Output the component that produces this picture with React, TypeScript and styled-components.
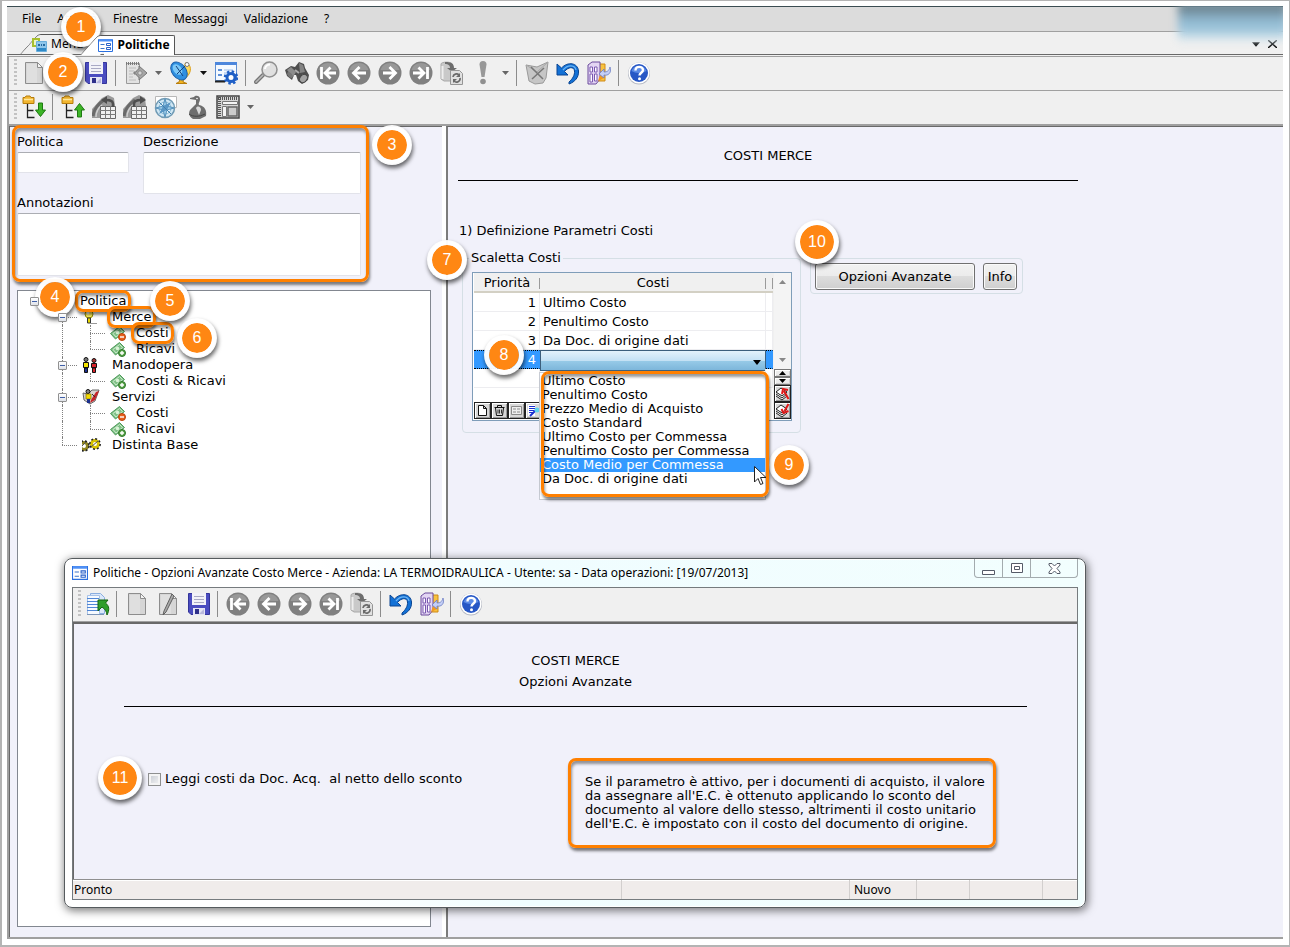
import React from "react";
import styled, { createGlobalStyle, css } from "styled-components";

const UI = `"Noto Sans", "Open Sans", sans-serif`;
const FORM = `"DejaVu Sans", Verdana, sans-serif`;
const ORANGE = "#ff8000";
const GREY = "#a0a0a0";
const DARK = "#696969";
const FACE = "#f0f0f0";
const PANE = "#f1f1fa";

const Global = createGlobalStyle`
  *, *::before, *::after { box-sizing: border-box; }
  body { margin: 0; background: #e6e6e6; color: #000; font: 13px/16px ${FORM}; }
  button, input, textarea, select { font: inherit; color: inherit; margin: 0; }
  button { border: 0; padding: 0; background: none; }
  ul { list-style: none; margin: 0; padding: 0; }
  svg { display: block; flex: none; }
`;

/* ---------- shell ---------- */

const Page = styled.div`
  position: relative;
`;
const Frame = styled.div`
  display: flex;
  min-height: 100vh;
  border: solid #b4b4b4;
  border-width: 1px 1px 2px 2px;
  background: #fff;
  padding: 5px 6px 6px 5px;
`;
const AppWindow = styled.div`
  position: relative;
  flex: 1;
  display: flex;
  flex-direction: column;
  overflow: hidden;
  background: ${FACE};
`;
const MenuBar = styled.nav`
  display: flex;
  align-items: center;
  gap: 16px;
  height: 26px;
  padding-left: 15px;
  border-top: 1px solid #3b4c52;
  border-bottom: 1px solid ${GREY};
  background: #dcdcdc;
`;
const MenuItem = styled.button`
  font: 12px/16px ${UI};
`;
const CaptionHaze = styled.div`
  position: absolute;
  top: -4px;
  right: -4px;
  width: 109px;
  height: 39px;
  background: linear-gradient(#5d7079, #93bcd4 50%, #9cc4da 70%, #e4edf1);
  filter: blur(4px);
`;
const TabBar = styled.div`
  display: flex;
  align-items: flex-end;
  height: 23px;
  padding: 0 6px 0 13px;
  border-bottom: 1px solid ${DARK};
`;
const Tab = styled.button<{ $active?: boolean }>`
  position: relative;
  display: flex;
  align-items: center;
  gap: 4px;
  height: 20px;
  padding: 0 ${(p) => (p.$active ? 5 : 0)}px 0 ${(p) => (p.$active ? 18 : 12)}px;
  margin-left: ${(p) => (p.$active ? -3 : 0)}px;
  margin-bottom: ${(p) => (p.$active ? -1 : 0)}px;
  font: ${(p) => (p.$active ? "bold" : "normal")} 12px/16px ${UI};
  z-index: ${(p) => (p.$active ? 1 : 0)};
  &::before, &::after {
    content: "";
    position: absolute;
    z-index: -1;
    top: 0;
    bottom: 0;
    border-top: 1px solid #555;
    background: ${(p) => (p.$active ? "#fff" : FACE)};
  }
  &::before {
    left: 9px;
    width: 20px;
    border-left: 1px solid #555;
    border-top-left-radius: 3px;
    transform: skewX(-42deg);
  }
  &::after {
    left: 24px;
    right: ${(p) => (p.$active ? 0 : -8)}px;
    border-right: ${(p) => (p.$active ? "1px solid #555" : "0")};
    border-top-right-radius: 2px;
  }
`;
const TabTools = styled.div`
  display: flex;
  align-items: center;
  gap: 8px;
  height: 20px;
  margin-left: auto;
`;
const Shell = styled.div`
  flex: 1;
  display: flex;
  flex-direction: column;
  margin-top: 1px;
  border-top: 1px solid ${GREY};
  border-left: 2px solid ${GREY};
`;
const Toolbar = styled.div`
  display: flex;
  align-items: center;
  height: 34px;
  padding: 0 0 2px 5px;
  border-bottom: 1px solid ${GREY};
  background: ${FACE};
`;
const Grip = styled.span`
  width: 3px;
  height: 28px;
  margin-right: 1px;
  background: repeating-linear-gradient(#c2c2c2 0 2px, transparent 2px 4px);
`;
const ToolButton = styled.button`
  display: flex;
  align-items: center;
  justify-content: center;
  width: 31px;
  height: 28px;
`;
const DropButton = styled(ToolButton)`
  width: 14px;
`;
const Divider = styled.span<{ $tight?: boolean }>`
  width: 1px;
  height: 26px;
  margin: 0 4px 0 ${(p) => (p.$tight ? 3 : 4)}px;
  background: #8c8c8c;
`;
const Panes = styled.div`
  flex: 1;
  display: flex;
  border-top: 1px solid ${GREY};
  border-bottom: 2px solid ${GREY};
  background: ${PANE};
`;
const SidePane = styled.aside`
  display: flex;
  flex-direction: column;
  flex: none;
  width: 433px;
  padding: 7px 11px 10px 7px;
  border-top: 1px solid ${DARK};
  border-left: 1px solid ${DARK};
`;
const Splitter = styled.div`
  flex: none;
  width: 4px;
  background: #fff;
`;
const DetailPane = styled.main`
  flex: 1;
  padding: 21px 10px;
  border-top: 1px solid ${DARK};
  border-left: 2px solid #7c7c7c;
`;

/* ---------- form ---------- */

const HeaderForm = styled.form`
  position: relative;
  align-self: flex-start;
  display: grid;
  grid-template-columns: 112px 218px;
  column-gap: 14px;
`;
const Field = styled.label<{ $wide?: boolean }>`
  display: flex;
  flex-direction: column;
  gap: 2px;
  ${(p) => p.$wide && "grid-column: 1 / -1; padding-top: 1px;"}
`;
const boxed = css`
  width: 100%;
  border: 1px solid #e2e3ea;
  border-top-color: #abadb3;
  border-radius: 2px;
  background: #fff;
  resize: none;
  outline: 0;
  padding: 1px 3px;
`;
const TextBox = styled.input`
  ${boxed}
  height: 21px;
`;
const TextArea = styled.textarea<{ $h: number }>`
  ${boxed}
  display: block;
  height: ${(p) => p.$h}px;
`;

/* ---------- annotations ---------- */

const ring = css`
  border: 3px solid ${ORANGE};
  border-radius: 8px;
  box-shadow: 1px 3px 3px rgba(0, 0, 0, 0.5), inset 1px 3px 3px rgba(0, 0, 0, 0.4);
`;
const Ring = styled.span<{ $inset: string }>`
  position: absolute;
  inset: ${(p) => p.$inset};
  pointer-events: none;
  ${ring}
`;
const Step = styled.span<{ $x: number; $y: number; $big?: boolean }>`
  position: absolute;
  left: ${(p) => p.$x}px;
  top: ${(p) => p.$y}px;
  display: grid;
  place-items: center;
  width: ${(p) => (p.$big ? 44 : 40)}px;
  height: ${(p) => (p.$big ? 44 : 40)}px;
  margin: ${(p) => (p.$big ? "-22px 0 0 -22px" : "-20px 0 0 -20px")};
  border: 5px solid rgba(255, 255, 255, 0.96);
  border-radius: 50%;
  background: #ff8713;
  background-clip: padding-box;
  box-shadow: 1px 3px 4px rgba(0, 0, 0, 0.6);
  color: #fff;
  font: 16px/20px "Liberation Sans", Arial, sans-serif;
`;

/* ---------- tree ---------- */

const Tree = styled.ul`
  flex: 1;
  margin-top: 14px;
  padding: 2px 2px;
  border: 1px solid #828790;
  background: #fff;
`;
const TreeRow = styled.li`
  display: flex;
  align-items: center;
  height: 16px;
`;
const Guide = styled.span<{ $line?: "through" | "end" | "start"; $arm?: boolean }>`
  position: relative;
  flex: none;
  width: 28px;
  height: 16px;
  &::before {
    content: "";
    position: absolute;
    left: 14px;
    top: ${(p) => (p.$line === "start" ? 8 : 0)}px;
    bottom: ${(p) => (p.$line === "end" ? 8 : 0)}px;
    border-left: ${(p) => (p.$line ? "1px dotted #808080" : "0")};
  }
  &::after {
    content: "";
    position: absolute;
    left: 14px;
    top: 8px;
    width: 15px;
    border-top: ${(p) => (p.$arm ? "1px dotted #808080" : "0")};
  }
`;
const Expander = styled.button`
  position: absolute;
  z-index: 1;
  left: 10px;
  top: 4px;
  width: 9px;
  height: 9px;
  border: 1px solid #919191;
  border-radius: 1px;
  background: linear-gradient(#3f5fa8, #3f5fa8) center / 5px 1px no-repeat, linear-gradient(#fff, #dfe2e8);
`;
const TreeIcon = styled.span<{ $w: number }>`
  display: flex;
  flex: none;
  width: ${(p) => p.$w}px;
  margin: 0 6px;
`;
const TreeLabel = styled.span`
  position: relative;
  line-height: 16px;
  white-space: nowrap;
`;

/* ---------- detail ---------- */

const Title = styled.h1`
  max-width: 620px;
  margin: 0;
  padding-bottom: 16px;
  border-bottom: 1px solid #000;
  font: inherit;
  text-align: center;
`;
const SectionTitle = styled.h2`
  margin: 42px 0 11px 1px;
  font: inherit;
`;
const Groups = styled.div`
  display: flex;
  align-items: flex-start;
  gap: 9px;
  padding-left: 4px;
`;
const Group = styled.fieldset`
  width: 339px;
  min-width: 0;
  margin: 0;
  padding: 6px 8px 11px 9px;
  border: 1px solid #d5dfe5;
  border-radius: 4px;
`;
const Legend = styled.legend`
  margin-left: -3px;
  padding: 0 2px;
`;
const ActionGroup = styled.div`
  display: flex;
  gap: 8px;
  margin-top: 8px;
  padding: 4px 5px 3px 4px;
  border: 1px solid #d5dfe5;
  border-radius: 4px;
`;
const PushButton = styled.button<{ $w: number }>`
  width: ${(p) => p.$w}px;
  height: 27px;
  border: 1px solid #707070;
  border-radius: 3px;
  background: linear-gradient(#f2f2f2, #ebebeb 50%, #dddddd 50%, #cfcfcf);
  box-shadow: inset 0 0 0 1px #fafafa;
`;
const GridBox = styled.div`
  display: flex;
  height: 149px;
  border: 1px solid #7f9db9;
  background: #fff;
`;
const GridMain = styled.div`
  display: flex;
  flex-direction: column;
  flex: 1;
  padding-left: 1px;
`;
const Grid = styled.table`
  width: 100%;
  table-layout: fixed;
  border-spacing: 0;
`;
const HeadCell = styled.th`
  height: 20px;
  padding: 2px 0 0;
  border-bottom: 2px solid #d3d0c4;
  background: linear-gradient(90deg, transparent calc(100% - 1px), #9a9a9a 0) 0 5px / 100% 11px no-repeat, ${FACE};
  font-weight: normal;
  line-height: 16px;
`;
const Cell = styled.td<{ $num?: boolean; $sel?: boolean }>`
  position: relative;
  height: 19px;
  padding: ${(p) => (p.$sel ? 1 : 2)}px ${(p) => (p.$sel && !p.$num ? 0 : 3)}px 0;
  border-right: 1px solid #ededf0;
  border-bottom: 1px solid #ededf0;
  line-height: 16px;
  vertical-align: bottom;
  text-align: ${(p) => (p.$num ? "right" : "left")};
  ${(p) =>
    p.$sel &&
    css`
      border-top: 1px dotted #000;
      border-bottom: 1px dotted #000;
      border-right-color: #39f;
      background: #39f;
      color: #fff;
    `}
`;
const Combo = styled.select`
  position: absolute;
  left: 0;
  top: -1px;
  width: 226px;
  height: 21px;
  appearance: none;
  border: 1px solid #3c5f7c;
  background: linear-gradient(#e3f2fb, #c4e1f4 50%, #98cbe8 50%, #7db6da);
  color: #000;
`;
const ComboArrow = styled.svg`
  position: absolute;
  left: 213px;
  top: 9px;
`;
const Options = styled.ul`
  position: absolute;
  z-index: 2;
  left: -1px;
  top: 21px;
  width: 227px;
  height: 128px;
  padding-top: 1px;
  border: 1px solid #c8ccd4;
  background: #fff;
  color: #000;
`;
const Option = styled.li<{ $on?: boolean }>`
  height: 14px;
  padding-left: 2px;
  line-height: 14px;
  white-space: nowrap;
  background: ${(p) => (p.$on ? "#39f" : "transparent")};
  color: ${(p) => (p.$on ? "#fff" : "#000")};
`;
const Pointer = styled.svg`
  position: absolute;
  left: 214px;
  top: 93px;
  z-index: 1;
`;
const GridActions = styled.div`
  display: flex;
  margin-top: auto;
  padding-bottom: 1px;
`;
const TinyButton = styled.button<{ $h?: number }>`
  display: grid;
  flex: none;
  place-items: center;
  width: 17px;
  height: ${(p) => p.$h ?? 17}px;
  overflow: hidden;
  border: 1px solid ${(p) => (p.$h ? "#777" : "#222")};
  background: ${(p) => (p.$h ? "#ececec" : "#d8d8d8")};
  box-shadow: inset 1px 1px #fff, inset -1px -1px ${(p) => (p.$h ? "#d0d0d0" : "#999")};
`;
const GridSide = styled.div`
  display: flex;
  flex-direction: column;
  align-items: center;
  width: 18px;
  border-left: 1px solid #f0f0f0;
`;
const Scroll = styled.div`
  display: flex;
  flex-direction: column;
  justify-content: space-between;
  align-items: center;
  width: 17px;
  height: 96px;
  padding: 7px 0;
  background: #f4f4f4;
`;

/* ---------- dialog ---------- */

const Dialog = styled.section`
  position: absolute;
  left: 64px;
  top: 558px;
  width: 1022px;
  padding: 0 7px 7px;
  border: 1px solid #565b5e;
  border-radius: 8px;
  background: linear-gradient(90deg, #fff 25%, #f0fdff 45%, #f2fefe);
  box-shadow: 1px 2px 8px 1px rgba(0, 0, 0, 0.5), inset 0 0 0 1px #fff;
`;
const DialogBar = styled.header`
  display: flex;
  align-items: center;
  gap: 5px;
  height: 28px;
  font: 12px/16px ${UI};
`;
const CaptionButtons = styled.div`
  display: flex;
  align-self: flex-start;
  margin-left: auto;
  border: 1px solid #a3abae;
  border-top: 0;
  border-radius: 0 0 4px 4px;
`;
const CaptionButton = styled.button<{ $w: number }>`
  display: grid;
  place-items: center;
  width: ${(p) => p.$w}px;
  height: 18px;
  & + & {
    border-left: 1px solid #a3abae;
  }
`;
const DialogBody = styled.div`
  border: 1px solid #767b7e;
  background: ${PANE};
`;
const DialogContent = styled.div`
  padding: 26px 30px 31px 50px;
  border-top: 2px solid ${DARK};
  border-left: 1px solid ${DARK};
`;
const DialogTitle = styled.h2`
  margin: 0 20px 0 0;
  padding-bottom: 14px;
  border-bottom: 1px solid #000;
  font: inherit;
  line-height: 21px;
  text-align: center;
`;
const DialogRow = styled.div`
  display: flex;
  justify-content: space-between;
  align-items: flex-start;
  padding: 51px 51px 0 24px;
`;
const CheckLabel = styled.label`
  display: flex;
  align-items: center;
  gap: 4px;
  padding-top: 13px;
  white-space: pre;
`;
const CheckBox = styled.input`
  appearance: none;
  width: 13px;
  height: 13px;
  border: 1px solid #8e8f8f;
  background: linear-gradient(135deg, #c4c8d0, #f6f6f6);
  box-shadow: inset 0 0 0 2px #f4f4f4;
`;
const Note = styled.p`
  flex: none;
  width: 428px;
  margin: 0;
  padding: 14px 0 14px 14px;
  line-height: 14px;
  white-space: pre;
  ${ring}
`;
const StatusBar = styled.footer`
  display: flex;
  height: 20px;
  border-top: 1px solid #8f8f8f;
  background: #f0eceb;
  font: 12px/20px ${UI};
`;
const StatusCell = styled.span<{ $w?: number }>`
  ${(p) => (p.$w ? `width: ${p.$w}px;` : "flex: 1;")}
  padding-left: ${(p) => (p.$w ? 4 : 1)}px;
  box-shadow: inset 0 1px #fff;
  & + & {
    border-left: 1px solid #d2cfce;
  }
`;

/* ---------- icons ---------- */

const Svg = ({ s = 24, vb = 24, children }: { s?: number; vb?: number; children: React.ReactNode }) => (
  <svg width={s} height={s} viewBox={`0 0 ${vb} ${vb}`} fill="none" aria-hidden="true">
    {children}
  </svg>
);
const Caret = ({ c = "#666", w = 7 }: { c?: string; w?: number }) => (
  <svg width={w} height={w === 7 ? 4 : 5} viewBox="0 0 7 4" aria-hidden="true">
    <path d="M0 0h7L3.5 4z" fill={c} />
  </svg>
);
const PageShape = () => (
  <>
    <path d="M3.5 1.5h12l5 5v16h-17z" fill="#d6d6d6" stroke="#8d8d8d" />
    <path d="M5 3h10v19H5z" fill="#e2e2e2" opacity=".7" />
    <path d="M15.500 1.500v5h5z" fill="#f4f4f4" stroke="#8d8d8d" />
  </>
);
const NewIcon = () => <Svg><PageShape /></Svg>;
const EditIcon = () => (
  <Svg>
    <PageShape />
    <path d="M16 2 8 19l-1 4 3-3 8-16z" fill="#aaa" stroke="#606060" />
  </Svg>
);
const SaveIcon = () => (
  <Svg>
    <path d="M1.500 1.500h21v21H4l-2.500-2.500z" fill="#4a4cc0" stroke="#34359a" />
    <path d="M5 1h14v12H5z" fill="#f2f2f8" />
    <path d="M7 4.500h10M7 7.500h10M7 10.500h10" stroke="#a9a9c4" />
    <path d="M6 16h12v7H6z" fill="#e4e4f4" />
    <path d="M8 17h4v5H8z" fill="#2e2f8a" />
    <path d="m12 22 5-5v5z" fill="#b8b8dc" />
  </Svg>
);
const ExportIcon = () => (
  <Svg>
    <path d="M2.500 2.500h13v20h-13z" fill="#e2e2e2" stroke="#9a9a9a" />
    <path d="M2 2.500h14" stroke="#7a7a7a" strokeDasharray="1 1" strokeWidth="3" />
    <path d="M5 7h7M5 10h5M5 13h4M5 16h4M5 19h7" stroke="#bcbcbc" />
    <path d="M10 11h2c1-2 2-3 3-3V5l8 7-8 7v-3c-1 0-2-1-3-3h-2z" fill="#a6a6a6" stroke="#767676" />
    <circle cx="16" cy="12" r="2.200" fill="#d4d4d4" stroke="#888" />
  </Svg>
);
const DishIcon = () => (
  <Svg>
    <path d="M12 16c2 1 3 3 2 5l4 1.500H7L10 21z" fill="#f2b31f" stroke="#b97e0b" />
    <path d="M16 2c5 0 7 6 4 11s-8 7-12 4" fill="#ffd95c" stroke="#dc9e18" />
    <ellipse cx="10" cy="10" rx="7" ry="10" transform="rotate(-38 10 10)" fill="#2f8fe0" stroke="#1b5ea8" />
    <ellipse cx="8.500" cy="8.500" rx="4" ry="6" transform="rotate(-38 8.5 8.500)" fill="#7cc8f7" />
    <path d="m8 13 9-9M7 5l7 10" stroke="#16427c" />
    <circle cx="18" cy="3.500" r="2" fill="#fff" stroke="#777" />
  </Svg>
);
const FormGearIcon = () => (
  <Svg>
    <path d="M1.500 1.500h21v18h-21z" fill="#f4f9ff" stroke="#5e8ed2" />
    <path d="M1 1h22v3H1z" fill="#4c86dc" />
    <path d="M4 8h4v2H4zM4 13h4v2H4z" fill="#5d8fd8" />
    <path d="M10 9h9M10 12h3" stroke="#9bbce8" />
    <path d="M1 20.500h10" stroke="#222" strokeWidth="2" />
    <circle cx="17" cy="16.500" r="4" fill="#fff" stroke="#1f5fc6" strokeWidth="3" />
    <circle cx="17" cy="16.500" r="6" stroke="#1f5fc6" strokeWidth="2.500" strokeDasharray="2.400 2.300" />
  </Svg>
);
const SearchIcon = () => (
  <Svg>
    <path d="m9 14-7 7" stroke="#777" strokeWidth="4" strokeLinecap="round" />
    <path d="m9 14-7 7" stroke="#b9b9b9" strokeWidth="1.500" strokeLinecap="round" />
    <circle cx="15.500" cy="8.500" r="7.500" fill="#e0e0e0" stroke="#909090" strokeWidth="1.500" />
    <path d="M11 8a5 5 0 0 1 5-4.500" stroke="#fff" strokeWidth="2" />
  </Svg>
);
const BinocularsIcon = () => (
  <Svg>
    <path d="m0 9 6-4 4 1 4-5 5 2 1 4 4 7-1 5-6 4-4-3-2-6-2 0-2 5-5-4z" fill="#4e4e4e" />
    <path d="m2 9 4-3 5 5-3 5z" fill="#8c8c8c" />
    <path d="m14 2 4 2 2 7-5 1z" fill="#848484" />
    <path d="m10 9 4 3" stroke="#aaa" strokeWidth="2" />
    <ellipse cx="18.500" cy="17.500" rx="3.500" ry="4.500" transform="rotate(35 18.500 17.500)" fill="#a3a3a3" stroke="#444" />
    <ellipse cx="5" cy="14" rx="2" ry="3.500" transform="rotate(-40 5 14)" fill="#777" />
  </Svg>
);
const NavIcon = ({ kind }: { kind: "first" | "prev" | "next" | "last" }) => (
  <Svg>
    <circle cx="12" cy="12" r="11.500" fill="#808080" />
    <path d="M2.500 9a10 10 0 0 1 19 0z" fill="#989898" />
    <g
      transform={kind === "next" || kind === "last" ? "rotate(180 12 12)" : undefined}
      stroke="#fff"
      strokeWidth="2.800"
    >
      {kind === "prev" || kind === "next" ? (
        <path d="M19 12H7M12.500 6 6.500 12l6 6" />
      ) : (
        <path d="M5.500 6v12M20 12H9M14.500 6.500 9 12l5.500 5.500" />
      )}
    </g>
  </Svg>
);
const RefreshIcon = () => (
  <Svg>
    <path d="M1 3c0-2.500 11-2.500 11 0v17H4l-3-2z" fill="#c9c9c9" stroke="#a8a8a8" />
    <path d="M2.500 5v13" stroke="#eee" strokeWidth="2" />
    <path d="M5 1c7 0 9 2 9 6h3l-5 4-5-4h3c0-3-2-4-5-4z" fill="#6d6d6d" />
    <path d="M10.500 9.500h9l3 3v11h-12z" fill="#e0e0e0" stroke="#969696" />
    <path d="M13 16a3.500 3.500 0 0 1 6-2m1 3a3.500 3.500 0 0 1-6 3" stroke="#6a6a6a" strokeWidth="1.700" />
    <path d="M20 12v4h-4zM13 22v-4h4z" fill="#6a6a6a" />
  </Svg>
);
const AlertIcon = () => (
  <Svg>
    <path d="M8.500 3.500a3.500 3.500 0 0 1 7 0L13.500 16h-3z" fill="#989898" />
    <circle cx="12" cy="20.500" r="2.800" fill="#909090" />
  </Svg>
);
const CancelMailIcon = () => (
  <Svg>
    <path d="m1 4 11 2 11-5-2 16-3 5-8 1-6-3z" fill="#c6c6c6" stroke="#9a9a9a" />
    <path d="m1 4 11 7L23 1" stroke="#a8a8a8" />
    <path d="m6 6 12 12M19 7 7 18" stroke="#777" strokeWidth="1.500" />
  </Svg>
);
const UndoIcon = () => (
  <Svg>
    <path
      d="M1 3v11h11l-3.500-3.500C12 6 18 5 18.500 10c.4 4-2 8-5.500 11v2c6-2 10-7 9.500-13C22 2 12 0 5.500 7z"
      fill="#1371d6"
      stroke="#0a4592"
    />
    <path d="M7 9c5-6 12-5 13 0" stroke="#6db6f5" strokeWidth="1.200" />
  </Svg>
);
const ExitIcon = () => (
  <Svg>
    <path d="M11 3h7v17h-7z" fill="#f7c240" stroke="#d08a16" />
    <path d="M1 4 5 1h8v17l-4 5H1z" fill="#e3d5f3" stroke="#6a4b9c" />
    <path d="M3 6h2.500v5H3zM7.500 6H10v5H7.500zM3 13h2.500v8H3zM7.500 13H10v7H7.500z" fill="#fff" stroke="#7a58b0" />
    <path d="m11 20 6-3v-5l-3-1z" fill="#f39a1d" />
    <path d="M23 6c2 6-2 9-6 8v3l-5-4 5-5v3c3 0 5-1 6-5z" fill="#c4cff6" stroke="#6b7cc4" strokeWidth=".8" />
  </Svg>
);
const HelpIcon = () => (
  <Svg>
    <circle cx="12" cy="12.500" r="11" fill="#b6bac4" />
    <circle cx="12" cy="12" r="10.500" fill="#fff" />
    <circle cx="12" cy="12" r="9" fill="#2757c5" />
    <path d="M4.500 10a8 8 0 0 1 15 0c-4 2-10 3-15 0z" fill="#5b8ae6" />
    <path d="M8.500 9.500c0-5 7.500-4.500 7.500-.500 0 2.700-3.500 2.800-3.500 5.500" stroke="#fff" strokeWidth="2.400" />
    <circle cx="12.500" cy="17.800" r="1.500" fill="#fff" />
  </Svg>
);
const TreeArrowIcon = ({ up }: { up?: boolean }) => (
  <Svg>
    <path d="M1 2.500h2l1-1.500h4l1 1.500h3v6H1z" fill="#f2b630" stroke="#b57c0c" />
    <path d="M2 4.500h9" stroke="#ffe79b" strokeWidth="1.500" />
    <path d="M5.500 9v13.500h7M5.500 15.500h6" stroke="#222" strokeWidth="1.300" />
    <path
      d="M16.500 8h4v7h3L18.500 21.500l-5-6.500h3z"
      transform={up ? "rotate(180 18.500 15)" : undefined}
      fill="#3db527"
      stroke="#1e7a12"
    />
  </Svg>
);
const PhoneTableIcon = ({ flip }: { flip?: boolean }) => (
  <Svg>
    <path d="M0 23V14L10 3l6-3 6 3 1 8v12z" fill="#9a9a9a" />
    <path d="M1 21C2 13 6 9 12 5" stroke="#6a6a6a" strokeWidth="3" />
    <path d="M4 22c0-6 2-9 6-12" stroke="#d0d0d0" strokeWidth="1.500" />
    <path d="M8.500 11.500h15v12h-15z" fill="#f0f0f0" stroke="#666" />
    <path d="M8 15.500h16M8 19.500h16M13.500 11v13M18.500 11v13" stroke="#7a7a7a" />
    <g transform={flip ? "translate(32 0) scale(-1 1)" : undefined}>
      <path d="M21 12V9c0-3-3-4-7-4" stroke="#4e4e4e" strokeWidth="2.500" />
      <path d="m15 1-6 4 6 4z" fill="#4e4e4e" />
    </g>
  </Svg>
);
const CompassIcon = () => (
  <Svg>
    <path d="M1.500 1.500h21v11h-21z" fill="#fff" stroke="#b8b8b8" />
    <circle cx="11" cy="13" r="9.500" fill="#cfe6f3" stroke="#6f9ab4" strokeWidth="1.500" />
    <circle cx="11" cy="13" r="6" fill="#e8f6fd" stroke="#80b4d2" />
    <path d="M11 4l2 7 7 2-7 2-2 7-2-7-7-2 7-2z" fill="#9ccbe8" stroke="#3f7fae" strokeWidth=".8" />
    <path d="m17 7-4 8-8 4 4-8z" fill="#5a96c4" />
    <path d="m5 7 12 12" stroke="#3f7fae" />
  </Svg>
);
const DuckIcon = () => (
  <Svg>
    <path d="m5 3 4-1c1-2 6-2 6 2 0 3-2 4-1 6 6 1 8 6 7 11l-6 3H8c-5-3-5-8-1-11l4-4V5L5 4z" fill="#6e6e6e" />
    <path d="M11 13c2-3 5-1 5 2l-2 5z" fill="#d8d8d8" />
    <path d="M4 19c4 3 10 3 16 0" stroke="#444" />
    <circle cx="12" cy="3.500" r=".8" fill="#fff" />
  </Svg>
);
const LayoutIcon = () => (
  <Svg>
    <path d="M1 1h22v22H1z" fill="#d6d6d6" stroke="#444" strokeWidth="1.500" />
    <path d="M2 3.500h20M3.500 2v21" stroke="#555" strokeWidth="3" strokeDasharray="1 1" />
    <path d="M6.500 6.500h15v3h-15z" fill="#f4f4f4" stroke="#777" />
    <path d="M6.500 11.500h4v10h-4z" fill="#f4f4f4" stroke="#777" />
    <path d="M12 12h9v9h-9z" fill="#ccc" stroke="#666" strokeWidth="1.500" />
  </Svg>
);
const LoadIcon = () => (
  <Svg>
    <path d="M4.500 1.500h10l4 4v16h-14z" fill="#dbe8fa" stroke="#8aaee0" />
    <path d="M1.500 3.500h12v19h-12z" fill="#f6faff" stroke="#a8c2e8" />
    <path d="M1 6.500h12M1 9.500h11M1 12.500h11M1 15.500h12M1 18.500h13" stroke="#4f86d6" />
    <path d="M12 8h10l-2.500 3c4 3 4 7 1.500 12-.5-4-2-6-5-8l-4 4z" fill="#2f9e2a" stroke="#14640f" />
    <path d="M1 22.500h17" stroke="#7c96b8" />
  </Svg>
);
const FormIcon = ({ s = 15 }: { s?: number }) => (
  <Svg s={s} vb={15}>
    <path d="M.5 1.500h14v12H.5z" fill="#fff" stroke="#2b70e0" />
    <path d="M1 1h13v2.500H1z" fill="#4f90f5" />
    <path d="M2.500 6.500h4M2.500 10.500h4" stroke="#3c74c9" />
    <path d="M8.500 5.500h4v2h-4zM8.500 9.500h4v2h-4z" stroke="#2b62c9" />
  </Svg>
);
const MenuIcon = () => (
  <Svg s={15} vb={15}>
    <path d="M0 1h8v9H0z" fill="#a8bf2e" />
    <path d="M2 3h4v5H2z" fill="#edf3c4" />
    <path d="M4.500 4.500h10v10h-10z" fill="#8fc6ea" stroke="#6aaedb" />
    <path d="M6 7h2v2H6zM9 7h1v2H9zM11 7h2v2h-2z" fill="#2569a0" />
    <path d="M5 11h9v3H5z" fill="#2f8ac8" />
  </Svg>
);
const BulbIcon = () => (
  <Svg s={16} vb={16}>
    <circle cx="7" cy="5" r="4" fill="#fff35a" stroke="#9a8f00" />
    <path d="M5.500 9h3v5h-3z" fill="#e9d900" stroke="#333" />
    <path d="M8 14.500h7" stroke="#999" />
    <circle cx="6" cy="4" r="1.500" fill="#fff" />
  </Svg>
);
const PeopleIcon = () => (
  <Svg s={16} vb={16}>
    <circle cx="4" cy="2.500" r="2" fill="#777" stroke="#111" />
    <path d="M1.500 5.500h5v5h-5z" fill="#f4e400" stroke="#111" />
    <path d="M2.500 11h3v4.500h-3z" fill="#1b2f8e" stroke="#111" />
    <circle cx="12" cy="3.500" r="2" fill="#a33" stroke="#111" />
    <path d="M9.500 6.500h5v4h-5z" fill="#d8232a" stroke="#111" />
    <path d="M10.500 11h3v4.500h-3z" fill="#d8232a" stroke="#111" />
  </Svg>
);
const ServiceIcon = () => (
  <Svg s={18} vb={18}>
    <path d="m1 5 5 1 4-4h7l-4 11-5 3-6-4z" fill="#d8d4d0" stroke="#666" />
    <path d="m9 12 5-8 3-1-4 9-5 3z" fill="#c5242a" />
    <circle cx="6" cy="3.500" r="2" fill="#888" stroke="#111" />
    <path d="M4 6h5v5H4z" fill="#f4dc00" stroke="#8a7200" strokeWidth=".7" />
    <path d="M5 11h3v4H5z" fill="#1b2f8e" />
    <path d="m10 6 3 3" stroke="#333" />
  </Svg>
);
const GearsIcon = () => (
  <svg width="24" height="14" viewBox="4 0 24 14" fill="none" aria-hidden="true">
    <circle cx="6" cy="8" r="3.500" fill="#fff" stroke="#8f8420" strokeWidth="3" />
    <circle cx="6" cy="8" r="5" stroke="#222" strokeWidth="1.500" strokeDasharray="2 2" />
    <circle cx="17" cy="6" r="3.500" fill="#fff" stroke="#d8c400" strokeWidth="3" />
    <circle cx="17" cy="6" r="5.200" stroke="#222" strokeWidth="1.500" strokeDasharray="2 2" />
    <path d="m2 10 6-6M13 9l7-6" stroke="#555" />
  </svg>
);
const MoneyIcon = ({ minus }: { minus?: boolean }) => (
  <Svg s={16} vb={16}>
    <path d="m.5 8.500 9-7 5 5-9 7.500z" fill="#7fbf86" stroke="#4d9a5a" />
    <path d="m3 8.500 6.500-5 3 3L6 12z" stroke="#c9ecc9" />
    <circle cx="7.500" cy="7.500" r="1.800" fill="#d9f3d6" />
    <circle cx="12" cy="12" r="3.500" fill={minus ? "#e8601c" : "#5aa34a"} stroke={minus ? "#b8420c" : "#2f7a2a"} />
    <path d={minus ? "M10 12h4" : "M10 12h4M12 10v4"} stroke="#fff" strokeWidth="1.400" />
  </Svg>
);
const ListIcon = () => (
  <Svg s={16} vb={16}>
    <path d="M2 3h3v3H2zM2 9h3v3H2z" fill="#e09a40" />
    <path d="M7 4.500h8M7 10.500h8" stroke="#999" />
  </Svg>
);
const TinyPage = () => (
  <Svg s={13} vb={13}><path d="M2.500 1.500h5l3 3v7h-8zM7.500 1.500v3h3" fill="#fff" stroke="#111" /></Svg>
);
const TinyTrash = () => (
  <Svg s={13} vb={13}>
    <path d="M1.500 3.500h10M4.500 3V1.500h4V3M2.500 4l1 7.500h6l1-7.500" stroke="#111" />
    <path d="M5 5.500v4M6.500 5.500v4M8.500 5.500v4" stroke="#333" />
  </Svg>
);
const TinyForm = () => (
  <Svg s={13} vb={13}><path d="M1.500 2.500h10v8h-10zM3 5h3M7 5h3M3 8h3M7 8h3" fill="#eee" stroke="#8a8a8a" /></Svg>
);
const TinyList = () => (
  <Svg s={13} vb={13}>
    <path d="M1 1h7v11H1z" fill="#fff" />
    <path d="M2 2.500h6M2 4.500h6M2 6.500h5M2 8.500h4" stroke="#1a2fd0" />
    <path d="m3 12 6-6" stroke="#1a2fd0" strokeWidth="2" />
    <circle cx="10" cy="6" r="2.500" fill="#5fd4ee" />
  </Svg>
);
const StackIcon = ({ down }: { down?: boolean }) => (
  <Svg s={15} vb={15}>
    <path d="m1 6 5-4 6 4-5 4zM1 8l6 4 5-4M1 10l6 4 5-4" fill="#fff" stroke="#222" />
    {down ? (
      <path d="m13.500 1-4 7M6.500 6l2 4 5-2" stroke="#e01818" strokeWidth="2" />
    ) : (
      <path d="M13.500 13 9 5M7 8l1-5 5 1" stroke="#e01818" strokeWidth="2" />
    )}
  </Svg>
);
const UpDown = ({ up, c = "#000" }: { up?: boolean; c?: string }) => (
  <svg width="7" height="4" viewBox="0 0 7 4" aria-hidden="true">
    <path d={up ? "M0 4h7L3.500 0z" : "M0 0h7L3.500 4z"} fill={c} />
  </svg>
);

/* ---------- data ---------- */

type Tool = [string, React.ReactNode] | "sep" | "drop" | "dropDark";

const mainTools: Tool[] = [
  ["Nuovo", <NewIcon />],
  ["Modifica", <EditIcon />],
  ["Salva", <SaveIcon />],
  "sep",
  ["Esporta", <ExportIcon />],
  "drop",
  ["Collega", <DishIcon />],
  "dropDark",
  ["Proprietà", <FormGearIcon />],
  "sep",
  ["Cerca", <SearchIcon />],
  ["Trova", <BinocularsIcon />],
  ["Primo", <NavIcon kind="first" />],
  ["Precedente", <NavIcon kind="prev" />],
  ["Successivo", <NavIcon kind="next" />],
  ["Ultimo", <NavIcon kind="last" />],
  ["Aggiorna", <RefreshIcon />],
  ["Avvisi", <AlertIcon />],
  "drop",
  "sep",
  ["Elimina", <CancelMailIcon />],
  ["Annulla", <UndoIcon />],
  ["Esci", <ExitIcon />],
  "sep",
  ["Aiuto", <HelpIcon />],
];
const treeTools: Tool[] = [
  ["Espandi", <TreeArrowIcon />],
  "sep",
  ["Comprimi", <TreeArrowIcon up />],
  ["Importa tabella", <PhoneTableIcon />],
  ["Esporta tabella", <PhoneTableIcon flip />],
  ["Naviga", <CompassIcon />],
  ["Assistente", <DuckIcon />],
  ["Layout", <LayoutIcon />],
  "drop",
];
const dialogTools: Tool[] = [
  ["Carica", <LoadIcon />],
  "sep",
  ["Nuovo", <NewIcon />],
  ["Modifica", <EditIcon />],
  ["Salva", <SaveIcon />],
  "sep",
  ["Primo", <NavIcon kind="first" />],
  ["Precedente", <NavIcon kind="prev" />],
  ["Successivo", <NavIcon kind="next" />],
  ["Ultimo", <NavIcon kind="last" />],
  ["Aggiorna", <RefreshIcon />],
  "sep",
  ["Annulla", <UndoIcon />],
  ["Esci", <ExitIcon />],
  "sep",
  ["Aiuto", <HelpIcon />],
];

type Node = { label: string; level: 0 | 1 | 2; icon: React.ReactNode; marked?: boolean; last?: boolean; leaf?: boolean };
const nodes: Node[] = [
  { label: "Politica", level: 0, icon: <ListIcon />, marked: true },
  { label: "Merce", level: 1, icon: <BulbIcon />, marked: true },
  { label: "Costi", level: 2, icon: <MoneyIcon minus />, marked: true },
  { label: "Ricavi", level: 2, icon: <MoneyIcon />, last: true },
  { label: "Manodopera", level: 1, icon: <PeopleIcon /> },
  { label: "Costi & Ricavi", level: 2, icon: <MoneyIcon />, last: true },
  { label: "Servizi", level: 1, icon: <ServiceIcon /> },
  { label: "Costi", level: 2, icon: <MoneyIcon minus /> },
  { label: "Ricavi", level: 2, icon: <MoneyIcon />, last: true },
  { label: "Distinta Base", level: 1, icon: <GearsIcon />, last: true, leaf: true },
];

const gridRows = ["Ultimo Costo", "Penultimo Costo", "Da Doc. di origine dati"];
const options = [
  "Ultimo Costo",
  "Penultimo Costo",
  "Prezzo Medio di Acquisto",
  "Costo Standard",
  "Ultimo Costo per Commessa",
  "Penultimo Costo per Commessa",
  "Costo Medio per Commessa",
  "Da Doc. di origine dati",
];
const steps: [number, number][] = [
  [81, 27], [63, 72], [392, 145], [55, 297], [170, 301], [197, 338],
  [447, 260], [504, 355], [789, 465], [817, 242], [120, 778],
];

/* ---------- parts ---------- */

const Tools = ({ items, label, tight }: { items: Tool[]; label: string; tight?: boolean }) => (
  <Toolbar role="toolbar" aria-label={label}>
    <Grip />
    {items.map((t, i) =>
      t === "sep" ? (
        <Divider key={i} $tight={tight} />
      ) : t === "drop" || t === "dropDark" ? (
        <DropButton key={i} type="button" aria-label="Altre opzioni">
          <Caret c={t === "drop" ? "#666" : "#111"} />
        </DropButton>
      ) : (
        <ToolButton key={i} type="button" aria-label={t[0]}>{t[1]}</ToolButton>
      )
    )}
  </Toolbar>
);

const TreeItem = ({ node }: { node: Node }) => (
  <TreeRow>
    {node.level === 0 && (
      <Guide $arm><Expander type="button" aria-label="Comprimi" /></Guide>
    )}
    {node.level === 1 && (
      <>
        <Guide />
        <Guide $line={node.last ? "end" : "through"} $arm>
          {!node.leaf && <Expander type="button" aria-label="Comprimi" />}
        </Guide>
      </>
    )}
    {node.level === 2 && (
      <>
        <Guide />
        <Guide $line="through" />
        <Guide $line={node.last ? "end" : "through"} $arm />
      </>
    )}
    <TreeIcon $w={node.level === 1 ? 24 : 20}>{node.icon}</TreeIcon>
    <TreeLabel>
      {node.label}
      {node.marked && <Ring $inset="-3px -5px" />}
    </TreeLabel>
  </TreeRow>
);

const CostGrid = () => (
  <GridBox>
    <GridMain>
      <Grid>
        <colgroup>
          <col width="66" />
          <col width="226" />
          <col />
        </colgroup>
        <thead>
          <tr>
            <HeadCell scope="col">Priorità</HeadCell>
            <HeadCell scope="col">Costi</HeadCell>
            <HeadCell aria-hidden="true" />
          </tr>
        </thead>
        <tbody>
          {gridRows.map((r, i) => (
            <tr key={r}>
              <Cell $num>{i + 1}</Cell>
              <Cell>{r}</Cell>
              <Cell />
            </tr>
          ))}
          <tr>
            <Cell $num $sel>4</Cell>
            <Cell $sel>
              <Combo aria-label="Costo priorità 4" defaultValue="">
                <option value="" />
                {options.map((o) => <option key={o}>{o}</option>)}
              </Combo>
              <ComboArrow width="8" height="5" viewBox="0 0 8 5"><path d="M0 0h8L4 5z" fill="#000" /></ComboArrow>
              <Options role="listbox" aria-label="Costi">
                {options.map((o, i) => (
                  <Option key={o} role="option" aria-selected={i === 6} $on={i === 6}>{o}</Option>
                ))}
                <Ring $inset="-2px -4px 2px 1px" />
                <Pointer width="13" height="20" viewBox="0 0 13 20">
                  <path d="M.5.500v15.500l3.500-3.500 2.500 6 2.500-1-2.500-6h5.500z" fill="#fff" stroke="#222" />
                </Pointer>
              </Options>
            </Cell>
            <Cell $sel />
          </tr>
          <tr>
            <Cell /><Cell /><Cell />
          </tr>
        </tbody>
      </Grid>
      <GridActions>
        <TinyButton type="button" aria-label="Nuova riga"><TinyPage /></TinyButton>
        <TinyButton type="button" aria-label="Elimina riga"><TinyTrash /></TinyButton>
        <TinyButton type="button" aria-label="Dettaglio riga"><TinyForm /></TinyButton>
        <TinyButton type="button" aria-label="Cerca riga"><TinyList /></TinyButton>
      </GridActions>
    </GridMain>
    <GridSide>
      <Scroll><UpDown up c="#888" /><UpDown c="#888" /></Scroll>
      <TinyButton type="button" aria-label="Riga su" $h={8}><UpDown up /></TinyButton>
      <TinyButton type="button" aria-label="Riga giù" $h={8}><UpDown /></TinyButton>
      <TinyButton type="button" aria-label="Sposta su"><StackIcon /></TinyButton>
      <TinyButton type="button" aria-label="Sposta giù"><StackIcon down /></TinyButton>
    </GridSide>
  </GridBox>
);

const AdvancedDialog = () => (
  <Dialog role="dialog" aria-label="Opzioni Avanzate">
    <DialogBar>
      <FormIcon s={16} />
      <span>Politiche - Opzioni Avanzate Costo Merce - Azienda: LA TERMOIDRAULICA - Utente: sa - Data operazioni: [19/07/2013]</span>
      <CaptionButtons>
        <CaptionButton type="button" aria-label="Riduci" $w={27}>
          <svg width="13" height="14" viewBox="0 0 13 14"><path d="M.5 9.500h12v4H.5z" fill="#fff" stroke="#555b68" /></svg>
        </CaptionButton>
        <CaptionButton type="button" aria-label="Ingrandisci" $w={28}>
          <svg width="12" height="10" viewBox="0 0 12 10"><path d="M.5.500h11v9H.5z" fill="#fff" stroke="#555b68" /><path d="M3.500 3.500h5v3h-5z" fill="#fff" stroke="#555b68" /></svg>
        </CaptionButton>
        <CaptionButton type="button" aria-label="Chiudi" $w={47}>
          <svg width="13" height="11" viewBox="0 0 13 11">
            <path d="M1 .5h3l2.500 2.500L9 .5h3v1.500L9 5.500l3 3.500v1.500H9L6.500 8 4 10.500H1V9l3-3.500L1 2z" fill="#fff" stroke="#555b68" />
          </svg>
        </CaptionButton>
      </CaptionButtons>
    </DialogBar>
    <DialogBody>
      <Tools items={dialogTools} label="Strumenti opzioni" tight />
      <DialogContent>
        <DialogTitle>COSTI MERCE<br />Opzioni Avanzate</DialogTitle>
        <DialogRow>
          <CheckLabel>
            <CheckBox type="checkbox" />
            {"Leggi costi da Doc. Acq.  al netto dello sconto"}
          </CheckLabel>
          <Note>
            {"Se il parametro è attivo, per i documenti di acquisto, il valore\nda assegnare all'E.C. è ottenuto applicando lo sconto del\ndocumento al valore dello stesso, altrimenti il costo unitario\ndell'E.C. è impostato con il costo del documento di origine."}
          </Note>
        </DialogRow>
      </DialogContent>
      <StatusBar>
        <StatusCell>Pronto</StatusCell>
        <StatusCell $w={228} />
        <StatusCell $w={67}>Nuovo</StatusCell>
        <StatusCell $w={53} />
        <StatusCell $w={73} />
        <StatusCell $w={35} />
      </StatusBar>
    </DialogBody>
  </Dialog>
);

export default function App() {
  return (
    <Page>
      <Global />
      <Frame>
        <AppWindow>
          <MenuBar>
            {["File", "Attività", "Finestre", "Messaggi", "Validazione", "?"].map((m) => (
              <MenuItem key={m} type="button">{m}</MenuItem>
            ))}
          </MenuBar>
          <CaptionHaze />
          <TabBar>
            <Tab type="button"><MenuIcon />Menu</Tab>
            <Tab type="button" $active><FormIcon s={15} />Politiche</Tab>
            <TabTools>
              <button type="button" aria-label="Elenco schede"><Caret c="#000" w={8} /></button>
              <button type="button" aria-label="Chiudi scheda">
                <svg width="9" height="8" viewBox="0 0 9 8"><path d="m0 0 9 8M9 0 0 8" stroke="#000" strokeWidth="1.400" /></svg>
              </button>
            </TabTools>
          </TabBar>
          <Shell>
            <Tools items={mainTools} label="Strumenti" />
            <Tools items={treeTools} label="Strumenti albero" tight />
            <Panes>
              <SidePane>
                <HeaderForm>
                  <Field>Politica<TextBox type="text" /></Field>
                  <Field>Descrizione<TextArea $h={42} /></Field>
                  <Field $wide>Annotazioni<TextArea $h={63} /></Field>
                  <Ring $inset="-9px -8px -6px -5px" />
                </HeaderForm>
                <Tree>
                  {nodes.map((n, i) => <TreeItem key={i} node={n} />)}
                </Tree>
              </SidePane>
              <Splitter />
              <DetailPane>
                <Title>COSTI MERCE</Title>
                <SectionTitle>1) Definizione Parametri Costi</SectionTitle>
                <Groups>
                  <Group>
                    <Legend>Scaletta Costi</Legend>
                    <CostGrid />
                  </Group>
                  <ActionGroup>
                    <PushButton type="button" $w={160}>Opzioni Avanzate</PushButton>
                    <PushButton type="button" $w={34}>Info</PushButton>
                  </ActionGroup>
                </Groups>
              </DetailPane>
            </Panes>
          </Shell>
        </AppWindow>
      </Frame>
      <AdvancedDialog />
      {steps.map(([x, y], i) => (
        <Step key={i} $x={x} $y={y} $big={i > 8}>{i + 1}</Step>
      ))}
    </Page>
  );
}
